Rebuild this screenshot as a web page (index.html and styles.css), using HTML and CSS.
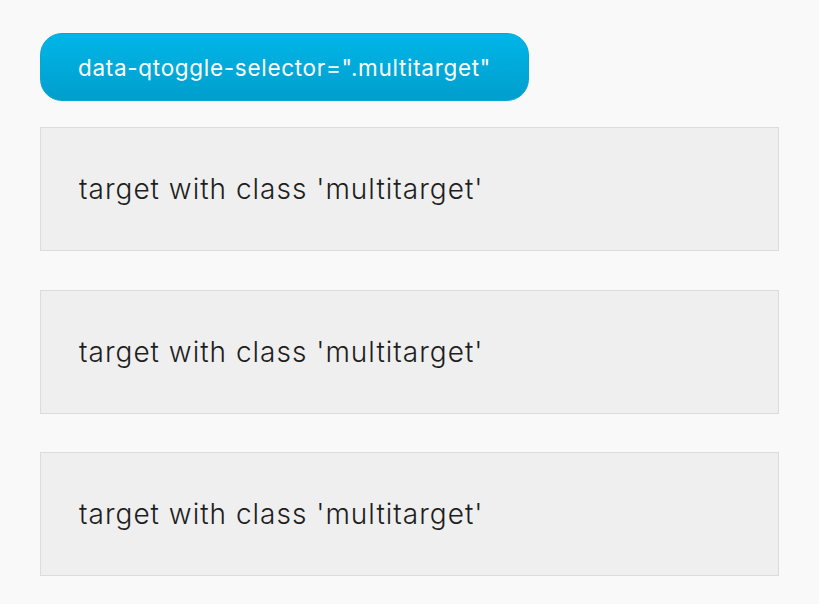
FILE: index.html
```html
<!DOCTYPE html>
<html>
<head>
    <title>qToggle multi target</title>
    <link rel="stylesheet" href="styles.css">
</head>
<body>
    <div class="demo">
        <!-- toggle button controlling all targets -->
        <button class="toggle-btn" data-qtoggle-selector=".multitarget">data-qtoggle-selector=".multitarget"</button>

        <div class="target multitarget">target with class 'multitarget'</div>
        <div class="target multitarget">target with class 'multitarget'</div>
        <div class="target multitarget">target with class 'multitarget'</div>
    </div>
</body>
</html>
```

FILE: styles.css
```css
body {
    margin: 0;
    background-color: #f9f9f9;
    font-family: Inter, "Noto Sans", sans-serif;
}

.demo {
    padding: 33px 40px 0 40px;
    width: 739px;
}

.toggle-btn {
    display: block;
    width: 489px;
    height: 68px;
    padding: 0;
    border: 1px solid #0aa6d2;
    border-radius: 22px;
    background: linear-gradient(to bottom, #00b6e8, #009ecc);
    color: #fff;
    font-family: Inter, "Noto Sans", sans-serif;
    font-size: 22.5px;
    letter-spacing: 0.7px;
    margin-bottom: 26px;
}

.target {
    box-sizing: border-box;
    height: 124px;
    padding: 0 38px;
    margin-bottom: 38.5px;
    display: flex;
    align-items: center;
    background-color: #efefef;
    border: 1px solid #dcdcdc;
    color: #1e1e1e;
    font-size: 28px;
    font-weight: 300;
    letter-spacing: 1px;
}
```
